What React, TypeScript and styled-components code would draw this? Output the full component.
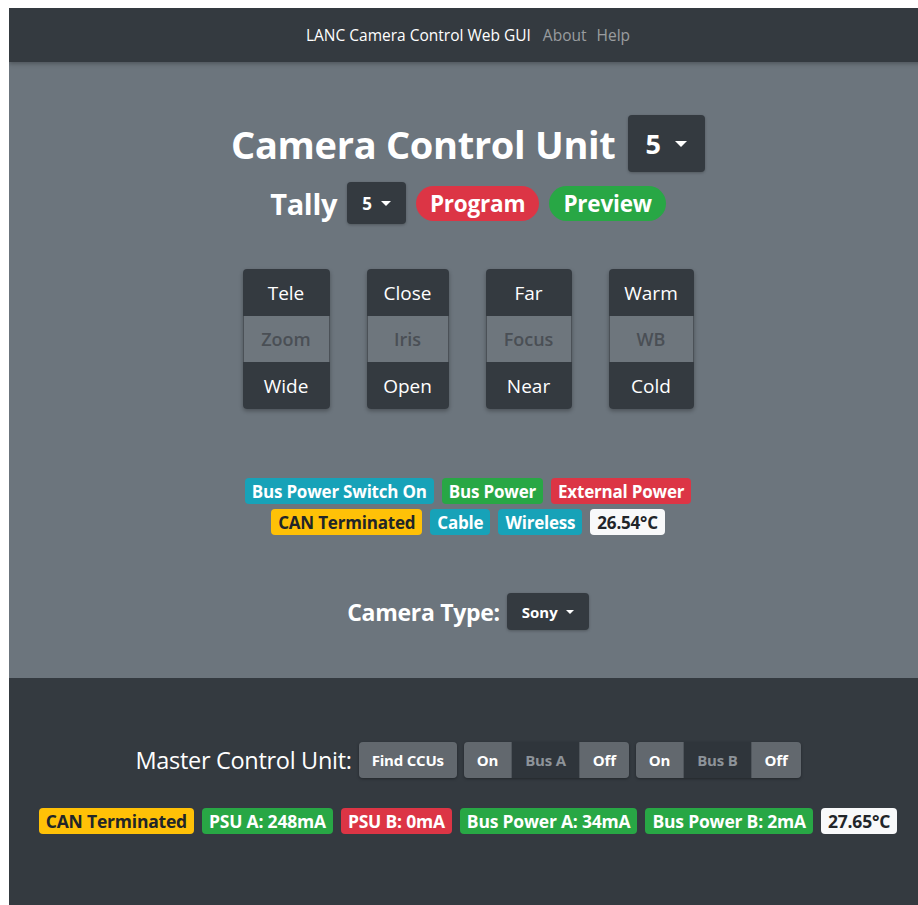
import React from 'react';
import styled, { createGlobalStyle } from 'styled-components';

const GlobalStyle = createGlobalStyle`
	body {
		margin: 8px 0 0 9px;
		overflow: hidden;
		background: #fff;
		font-family: 'Open Sans', 'Noto Sans', 'Liberation Sans', sans-serif;
	}
`;

const colors = {
	dark: '#343a40',
	secondary: '#6c757d',
	info: '#17a2b8',
	success: '#28a745',
	danger: '#dc3545',
	warning: '#ffc107',
	light: '#f8f9fa'
};

const Page = styled.div`
	width: 918px;
`;

const Navbar = styled.nav`
	height: 54px;
	background: ${colors.dark};
	display: flex;
	align-items: center;
	justify-content: center;
	gap: 10px;
	font-size: 15.5px;
	box-shadow: 0 2px 4px rgba(0, 0, 0, 0.25);
	position: relative;
`;

const Brand = styled.span`
	color: #fff;
	margin-right: 2px;
`;

const NavLink = styled.span`
	color: rgba(255, 255, 255, 0.5);
`;

const Main = styled.main`
	background: ${colors.secondary};
	height: 616px;
	box-sizing: border-box;
	padding-top: 53px;
	display: flex;
	flex-direction: column;
	align-items: center;
`;

const Row = styled.div<{ gap?: number; mt?: number }>`
	display: flex;
	align-items: center;
	justify-content: center;
	gap: ${p => p.gap ?? 8}px;
	margin-top: ${p => p.mt ?? 0}px;
`;

const Heading = styled.h1<{ size: number }>`
	margin: 0;
	color: #fff;
	font-size: ${p => p.size}px;
	font-weight: 700;
	letter-spacing: -0.3px;
`;

const Dropdown = styled.button<{ size: number; h: number; padX: number }>`
	display: inline-flex;
	align-items: center;
	gap: ${p => Math.round(p.size * 0.5)}px;
	height: ${p => p.h}px;
	padding: 0 ${p => p.padX}px;
	background: ${colors.dark};
	border: none;
	border-radius: 4px;
	color: #fff;
	font-family: inherit;
	font-weight: 700;
	font-size: ${p => p.size}px;
	box-shadow: 0 1px 3px rgba(0, 0, 0, 0.25);
`;

const Caret = styled.span<{ w: number }>`
	width: 0;
	height: 0;
	border-left: ${p => p.w}px solid transparent;
	border-right: ${p => p.w}px solid transparent;
	border-top: ${p => p.w}px solid #fff;
`;

const Pill = styled.span<{ bg: string }>`
	display: inline-flex;
	align-items: center;
	height: 35px;
	padding: 0 14px;
	border-radius: 18px;
	background: ${p => p.bg};
	color: #fff;
	font-weight: 700;
	font-size: 22.5px;
	letter-spacing: -0.2px;
`;

const Controls = styled.div`
	display: flex;
	gap: 37px;
	margin-top: 45px;
`;

const VGroup = styled.div<{ w: number }>`
	display: flex;
	flex-direction: column;
	width: ${p => p.w}px;
	border-radius: 4px;
	overflow: hidden;
	box-shadow: 0 2px 4px rgba(0, 0, 0, 0.3);
`;

const VButton = styled.div`
	height: 47px;
	display: flex;
	align-items: center;
	justify-content: center;
	background: ${colors.dark};
	color: #fff;
	font-size: 19px;
`;

const VLabel = styled.div`
	height: 46px;
	box-sizing: border-box;
	display: flex;
	align-items: center;
	justify-content: center;
	background: #6e767d;
	border-left: 1px solid #4b5157;
	border-right: 1px solid #4b5157;
	color: #4a4f55;
	font-weight: 600;
	font-size: 18px;
`;

const BadgeRows = styled.div`
	display: flex;
	flex-direction: column;
	align-items: center;
	gap: 5px;
	margin-top: 69px;
`;

const Badge = styled.span<{ bg: string; dark?: boolean; size?: number }>`
	display: inline-flex;
	align-items: center;
	height: 26px;
	padding: 0 7px;
	border-radius: 4px;
	background: ${p => p.bg};
	color: ${p => (p.dark ? '#212529' : '#fff')};
	font-weight: 700;
	font-size: ${p => p.size ?? 17}px;
	letter-spacing: -0.2px;
	white-space: nowrap;
`;

const Label = styled.span<{ size: number; weight: number }>`
	color: #fff;
	font-size: ${p => p.size}px;
	font-weight: ${p => p.weight};
	letter-spacing: -0.3px;
`;

const Footer = styled.footer`
	background: ${colors.dark};
	height: 240px;
	box-sizing: border-box;
	padding-top: 64px;
	display: flex;
	flex-direction: column;
	align-items: center;
`;

const BtnGroup = styled.div`
	display: flex;
	border-radius: 4px;
	overflow: hidden;
	box-shadow: 0 1px 3px rgba(0, 0, 0, 0.35);
`;

const Btn = styled.button<{ active?: boolean; padX?: number }>`
	height: 36px;
	padding: 0 ${p => p.padX ?? 13}px;
	border: none;
	background: ${p => (p.active ? '#2f353b' : '#62686e')};
	border-left: ${p => (p.active ? '1px solid #50565c' : 'none')};
	border-right: ${p => (p.active ? '1px solid #50565c' : 'none')};
	color: ${p => (p.active ? '#8d9399' : '#fff')};
	font-family: inherit;
	font-weight: 700;
	font-size: 15px;
	letter-spacing: -0.2px;
`;

const controls = [
	{ up: 'Tele', name: 'Zoom', down: 'Wide', w: 87 },
	{ up: 'Close', name: 'Iris', down: 'Open', w: 82 },
	{ up: 'Far', name: 'Focus', down: 'Near', w: 86 },
	{ up: 'Warm', name: 'WB', down: 'Cold', w: 85 }
];

export default function App() {
	return (
		<>
			<GlobalStyle />
			<Page>
				<Navbar>
					<Brand>LANC Camera Control Web GUI</Brand>
					<NavLink>About</NavLink>
					<NavLink>Help</NavLink>
				</Navbar>
				<Main>
					<Row gap={12}>
						<Heading size={38}>Camera Control Unit</Heading>
						<Dropdown size={27} h={57} padX={18}>
							5 <Caret w={6} />
						</Dropdown>
					</Row>
					<Row gap={10} mt={10}>
						<Heading size={29}>Tally</Heading>
						<Dropdown size={17} h={42} padX={15}>
							5 <Caret w={5} />
						</Dropdown>
						<Pill bg={colors.danger}>Program</Pill>
						<Pill bg={colors.success}>Preview</Pill>
					</Row>
					<Controls>
						{controls.map(c => (
							<VGroup key={c.name} w={c.w}>
								<VButton>{c.up}</VButton>
								<VLabel>{c.name}</VLabel>
								<VButton>{c.down}</VButton>
							</VGroup>
						))}
					</Controls>
					<BadgeRows>
						<Row gap={8}>
							<Badge bg={colors.info}>Bus Power Switch On</Badge>
							<Badge bg={colors.success}>Bus Power</Badge>
							<Badge bg={colors.danger}>External Power</Badge>
						</Row>
						<Row gap={8}>
							<Badge bg={colors.warning} dark>
								CAN Terminated
							</Badge>
							<Badge bg={colors.info}>Cable</Badge>
							<Badge bg={colors.info}>Wireless</Badge>
							<Badge bg={colors.light} dark>
								26.54°C
							</Badge>
						</Row>
					</BadgeRows>
					<Row gap={7} mt={58}>
						<Label size={23} weight={700}>
							Camera Type:
						</Label>
						<Dropdown size={15} h={37} padX={15}>
							Sony <Caret w={4} />
						</Dropdown>
					</Row>
				</Main>
				<Footer>
					<Row gap={7}>
						<Label size={23.5} weight={400}>
							Master Control Unit:
						</Label>
						<BtnGroup>
							<Btn>Find CCUs</Btn>
						</BtnGroup>
						<BtnGroup>
							<Btn>On</Btn>
							<Btn active>Bus A</Btn>
							<Btn>Off</Btn>
						</BtnGroup>
						<BtnGroup>
							<Btn>On</Btn>
							<Btn active>Bus B</Btn>
							<Btn>Off</Btn>
						</BtnGroup>
					</Row>
					<Row gap={8} mt={30}>
						<Badge bg={colors.warning} dark size={17.5}>
							CAN Terminated
						</Badge>
						<Badge bg={colors.success} size={17.5}>
							PSU A: 248mA
						</Badge>
						<Badge bg={colors.danger} size={17.5}>
							PSU B: 0mA
						</Badge>
						<Badge bg={colors.success} size={17.5}>
							Bus Power A: 34mA
						</Badge>
						<Badge bg={colors.success} size={17.5}>
							Bus Power B: 2mA
						</Badge>
						<Badge bg={colors.light} dark size={17.5}>
							27.65°C
						</Badge>
					</Row>
				</Footer>
			</Page>
		</>
	);
}
